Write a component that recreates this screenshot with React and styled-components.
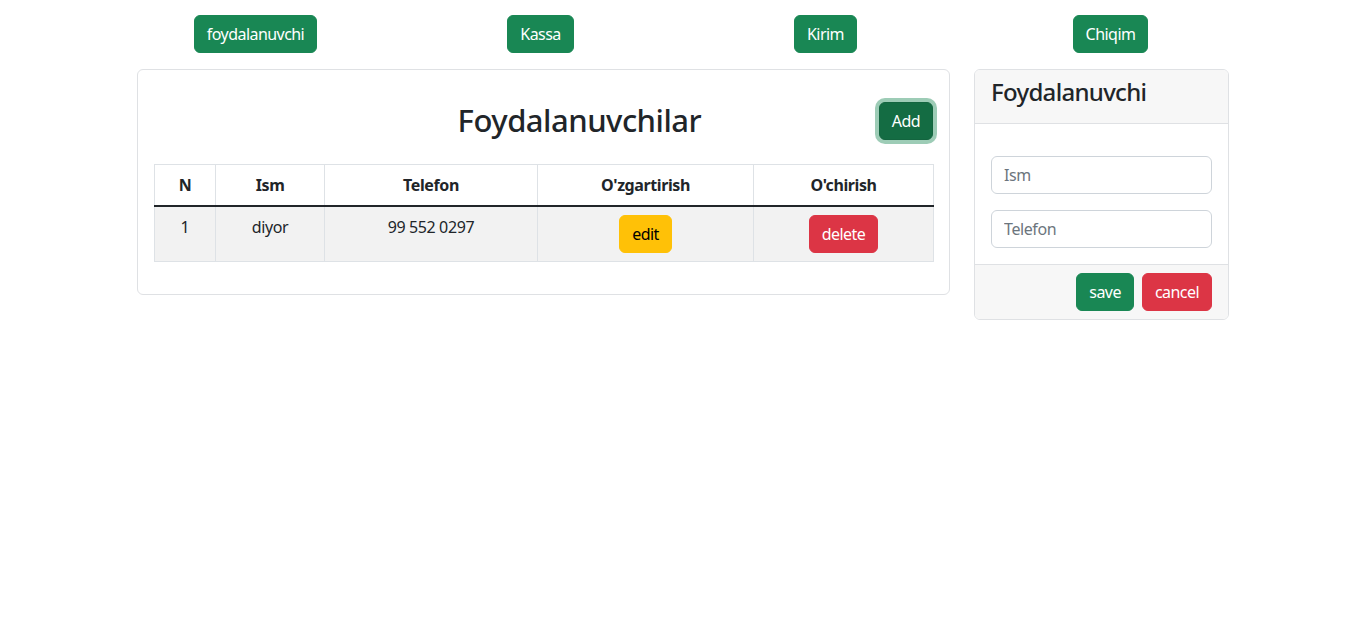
import React from "react";
import styled, { createGlobalStyle, css } from "styled-components";

const Global = createGlobalStyle`
  * { box-sizing: border-box; }
  body {
    margin: 0;
    background: #fff;
    color: #212529;
    font-family: "Noto Sans", "Open Sans", "DejaVu Sans", sans-serif;
    font-size: 16px;
    line-height: 1.5;
  }
`;

const Page = styled.div`
  padding-top: 15px;
`;

const Nav = styled.nav`
  width: 1145px;
  padding-left: 5px;
  margin: 0 auto;
  display: grid;
  grid-template-columns: repeat(4, 1fr);
  justify-items: center;
`;

const variants = {
  success: css`
    background: #198754;
    border-color: #198754;
    color: #fff;
  `,
  successActive: css`
    background: #146c43;
    border-color: #13653f;
    color: #fff;
    box-shadow: 0 0 0 4px rgba(60, 153, 110, 0.5);
  `,
  warning: css`
    background: #ffc107;
    border-color: #ffc107;
    color: #000;
  `,
  danger: css`
    background: #dc3545;
    border-color: #dc3545;
    color: #fff;
  `,
};

const Button = styled.button`
  font-family: inherit;
  font-size: 16px;
  line-height: 24px;
  padding: 6px 12px;
  border: 1px solid transparent;
  border-radius: 6px;
  cursor: pointer;
  letter-spacing: -0.55px;
  ${(p) => variants[p.$variant || "success"]}
`;

const Main = styled.main`
  display: flex;
  align-items: flex-start;
  gap: 24px;
  margin: 16px 0 0 137px;
`;

const Card = styled.section`
  width: ${(p) => p.$width}px;
  border: 1px solid #dfe1e4;
  border-radius: 6px;
  background: #fff;
  overflow: hidden;
`;

const CardBody = styled.div`
  padding: 16px;
`;

const ListHeader = styled.div`
  display: flex;
  align-items: center;
  height: 70px;
  margin-bottom: 8px;
`;

const Title = styled.h2`
  flex: 1;
  margin: 0;
  padding-left: 126px;
  text-align: center;
  font-size: 31px;
  font-weight: 500;
  line-height: 1.2;
  letter-spacing: -0.5px;
`;

const Table = styled.table`
  width: 779px;
  table-layout: fixed;
  border-collapse: collapse;
  margin-bottom: 16px;
  text-align: center;
  vertical-align: top;
`;

const Th = styled.th`
  padding: 8px;
  border: 1px solid #dee2e6;
  border-bottom: 2px solid #212529;
  font-weight: 700;
  letter-spacing: -0.4px;
`;

const Td = styled.td`
  padding: 8px;
  border: 1px solid #dee2e6;
  background: #f2f2f2;
  vertical-align: top;
  letter-spacing: -0.4px;
`;

const CardHeader = styled.header`
  padding: 8px 16px;
  background: #f7f7f7;
  border-bottom: 1px solid #dfe1e4;
`;

const CardTitle = styled.h4`
  margin: 0 0 8px;
  font-size: 24px;
  font-weight: 500;
  line-height: 1.2;
  letter-spacing: -0.7px;
`;

const Input = styled.input`
  display: block;
  width: 100%;
  margin-top: 16px;
  padding: 6px 12px;
  font-family: inherit;
  font-size: 16px;
  line-height: 24px;
  color: #212529;
  border: 1px solid #ced4da;
  border-radius: 6px;
  letter-spacing: -0.4px;
  &::placeholder {
    color: #6c757d;
  }
`;

const CardFooter = styled.footer`
  display: flex;
  justify-content: flex-end;
  gap: 8px;
  padding: 8px 16px;
  background: #f7f7f7;
  border-top: 1px solid #dfe1e4;
`;

const widths = [61, 109, 213, 216, 180];

export default function App() {
  return (
    <>
      <Global />
      <Page>
        <Nav>
          <Button>foydalanuvchi</Button>
          <Button>Kassa</Button>
          <Button>Kirim</Button>
          <Button>Chiqim</Button>
        </Nav>
        <Main>
          <Card $width={813}>
            <CardBody>
              <ListHeader>
                <Title>Foydalanuvchilar</Title>
                <Button $variant="successActive">Add</Button>
              </ListHeader>
              <Table>
                <colgroup>
                  {widths.map((w, i) => (
                    <col key={i} style={{ width: w }} />
                  ))}
                </colgroup>
                <thead>
                  <tr>
                    <Th>N</Th>
                    <Th>Ism</Th>
                    <Th>Telefon</Th>
                    <Th>O'zgartirish</Th>
                    <Th>O'chirish</Th>
                  </tr>
                </thead>
                <tbody>
                  <tr>
                    <Td>1</Td>
                    <Td>diyor</Td>
                    <Td>99 552 0297</Td>
                    <Td>
                      <Button $variant="warning">edit</Button>
                    </Td>
                    <Td>
                      <Button $variant="danger">delete</Button>
                    </Td>
                  </tr>
                </tbody>
              </Table>
            </CardBody>
          </Card>
          <Card $width={255}>
            <CardHeader>
              <CardTitle>Foydalanuvchi</CardTitle>
            </CardHeader>
            <CardBody>
              <Input placeholder="Ism" />
              <Input placeholder="Telefon" />
            </CardBody>
            <CardFooter>
              <Button>save</Button>
              <Button $variant="danger">cancel</Button>
            </CardFooter>
          </Card>
        </Main>
      </Page>
    </>
  );
}
